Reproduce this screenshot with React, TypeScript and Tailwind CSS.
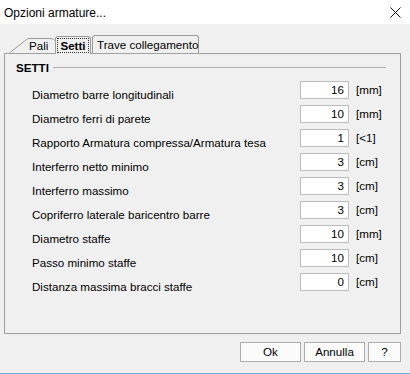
import React from "react";

const rows: { label: string; value: string; unit: string }[] = [
  { label: "Diametro barre longitudinali", value: "16", unit: "[mm]" },
  { label: "Diametro ferri di parete", value: "10", unit: "[mm]" },
  { label: "Rapporto Armatura compressa/Armatura tesa", value: "1", unit: "[<1]" },
  { label: "Interferro netto minimo", value: "3", unit: "[cm]" },
  { label: "Interferro massimo", value: "3", unit: "[cm]" },
  { label: "Copriferro laterale baricentro barre", value: "3", unit: "[cm]" },
  { label: "Diametro staffe", value: "10", unit: "[mm]" },
  { label: "Passo minimo staffe", value: "10", unit: "[cm]" },
  { label: "Distanza massima bracci staffe", value: "0", unit: "[cm]" },
];

export default function App() {
  return (
    <div
      className="w-[410px] h-[374px] bg-[#f0f0f0] flex flex-col border-b border-[#7ea7cf] text-[11.6px] text-black overflow-hidden"
      style={{ fontFamily: '"Liberation Sans", Arial, sans-serif' }}
    >
      {/* Title bar */}
      <div className="h-[24px] bg-white flex items-center justify-between pl-[4px] pr-[9px] shrink-0">
        <span className="text-[12px] leading-[14px] mt-[1px]">Opzioni armature...</span>
        <svg width="11" height="11" viewBox="0 0 11 11" className="mt-[1px]">
          <path d="M0.5 0.5 L10.5 10.5 M10.5 0.5 L0.5 10.5" stroke="#111" strokeWidth="1" fill="none" />
        </svg>
      </div>

      {/* Tabs */}
      <div className="relative h-[29px] shrink-0">
        {/* Pali */}
        <div className="absolute left-[9px] top-[13px] w-[48px] h-[16px]">
          <svg width="48" height="16" viewBox="0 0 48 16" className="absolute inset-0">
            <path d="M0.5 16 L17.5 2.5 Q18.5 1.5 20 1.5 L42 1.5 Q44.5 1.5 46.5 4" stroke="#9c9c9c" strokeWidth="1" fill="#f0f0f0" />
          </svg>
          <span className="absolute left-[20px] top-[2px] leading-[14px]">Pali</span>
        </div>
        {/* Setti (selected) */}
        <div className="absolute left-[55px] top-[12px] w-[36px] h-[18px] bg-[#f0f0f0] border border-b-0 border-[#9c9c9c] rounded-t-[3px] z-10 p-[1px]">
          <div className="w-full h-[15px] border border-dotted border-[#333] flex items-center justify-center">
            <span className="font-bold leading-[14px]">Setti</span>
          </div>
        </div>
        {/* Trave collegamento */}
        <div className="absolute left-[92px] top-[11px] w-[107px] h-[18px] border border-b-0 border-[#9c9c9c] rounded-t-[3px] flex items-center pl-[4px]">
          <span className="leading-[14px] whitespace-nowrap">Trave collegamento</span>
        </div>
      </div>

      {/* Panel */}
      <div className="ml-[4px] w-[397px] h-[281px] border border-[#a0a0a0] shrink-0 flex flex-col">
        <div className="flex items-center mt-[7px] pl-[11px] pr-[14px] h-[14px]">
          <span className="font-bold leading-[14px]">SETTI</span>
          <div className="flex-1 h-px bg-[#b0b0b0] ml-[4px] -mt-[1px]" />
        </div>
        <div className="flex flex-col mt-[6px] pl-[27px]">
          {rows.map((r) => (
            <div key={r.label} className="flex items-start h-[24px]">
              <span className="w-[268px] mt-[7px] leading-[14px] whitespace-nowrap">{r.label}</span>
              <div className="w-[49px] h-[18px] bg-white border border-[#bcbcbc] flex items-center justify-end pr-[4px] leading-[14px]">
                {r.value}
              </div>
              <span className="ml-[7px] leading-[18px]">{r.unit}</span>
            </div>
          ))}
        </div>
      </div>

      {/* Buttons */}
      <div className="flex justify-end gap-[3px] pr-[9px] mt-[8px]">
        <button className="w-[61px] h-[20px] bg-[#fbfbfb] border border-[#adadad] leading-[14px]">Ok</button>
        <button className="w-[61px] h-[20px] bg-[#fbfbfb] border border-[#adadad] leading-[14px]">Annulla</button>
        <button className="w-[33px] h-[20px] bg-[#fbfbfb] border border-[#adadad] leading-[14px]">?</button>
      </div>
    </div>
  );
}
